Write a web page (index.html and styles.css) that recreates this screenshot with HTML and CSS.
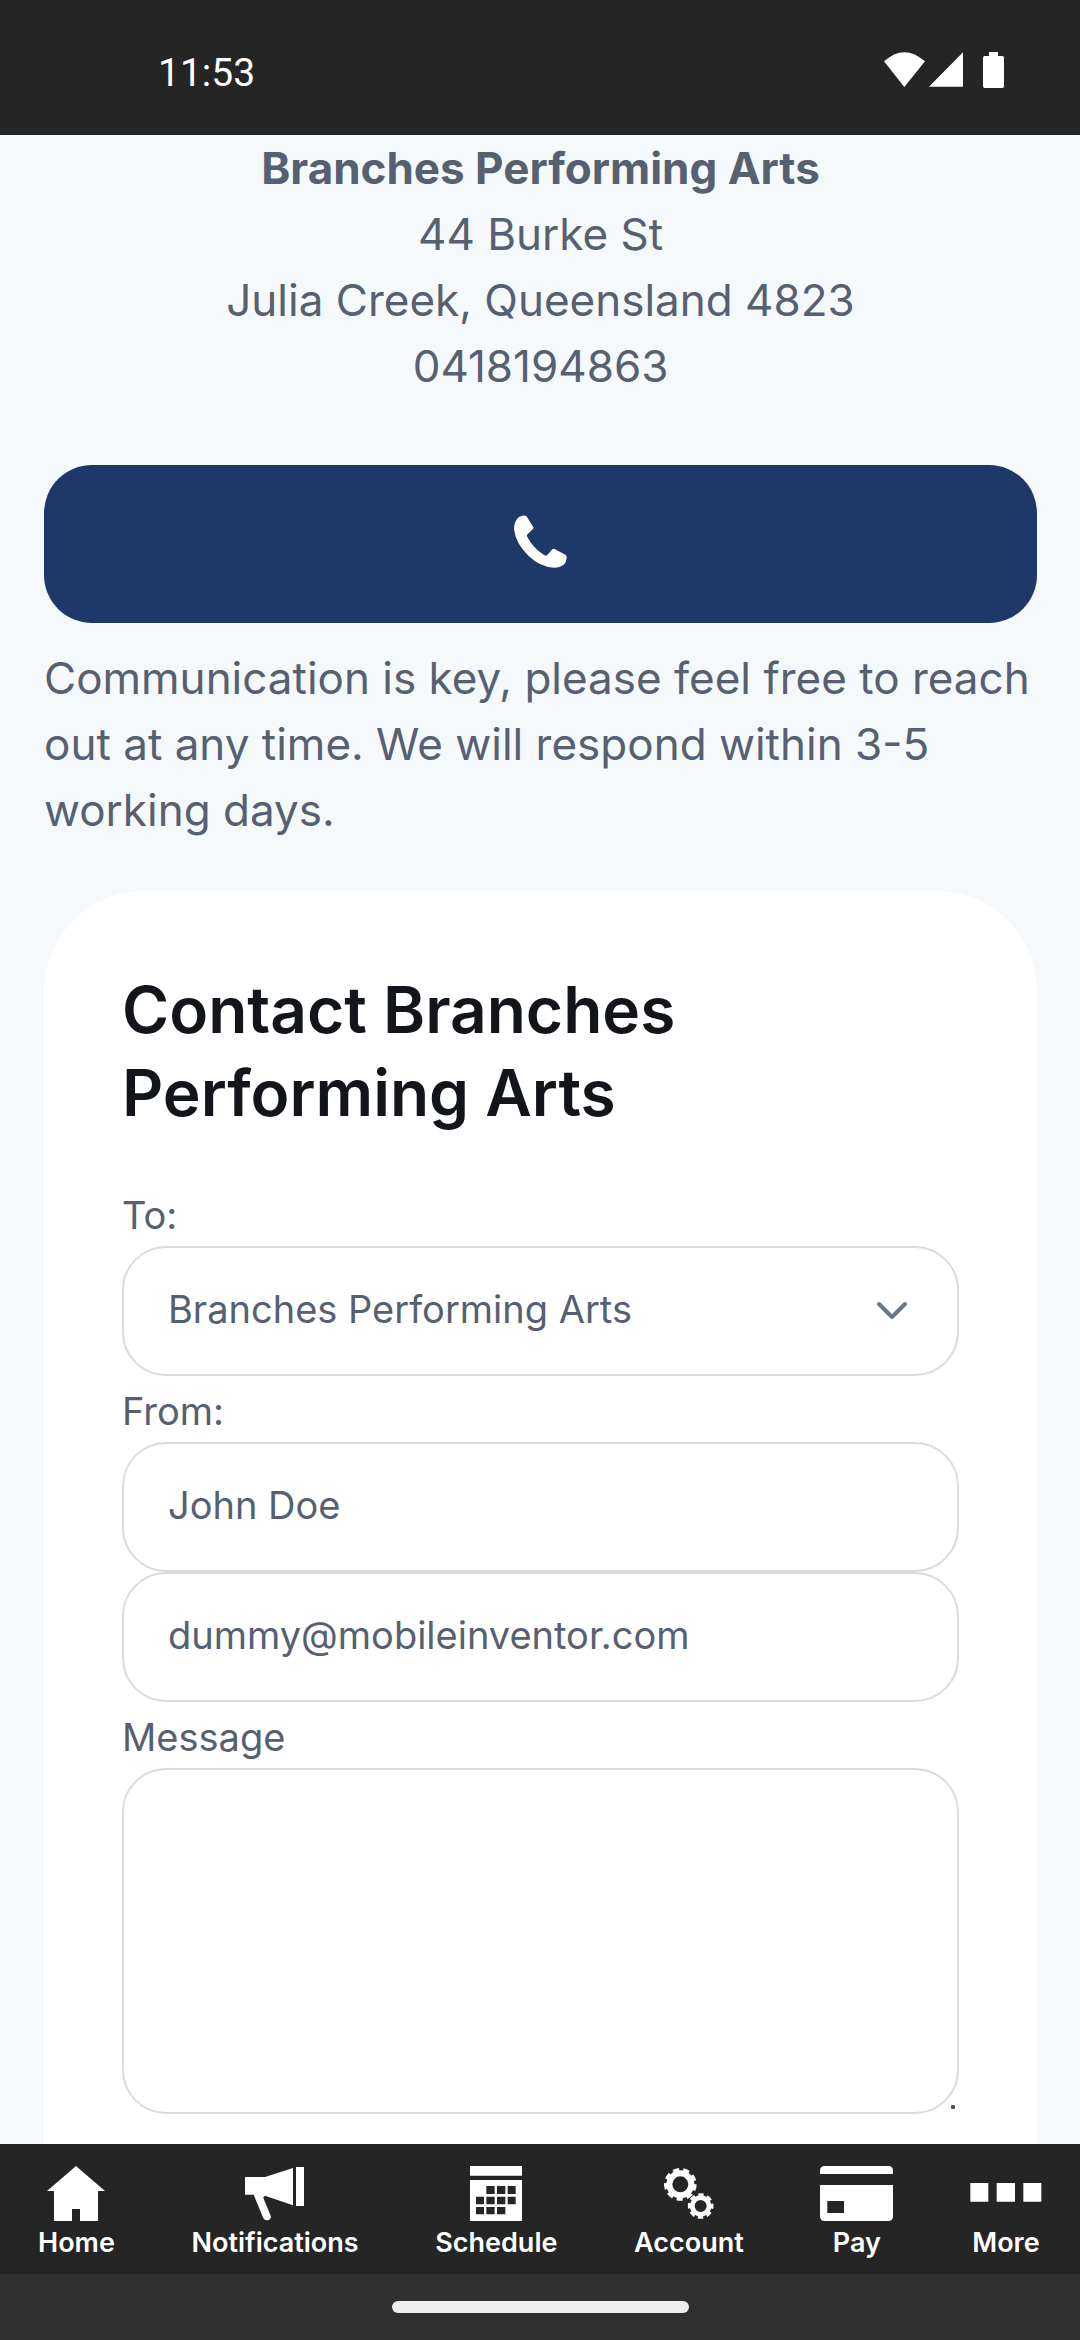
FILE: index.html
```html
<!DOCTYPE html>
<html lang="en">
<head>
<meta charset="utf-8">
<meta name="viewport" content="width=device-width, initial-scale=1">
<title>Branches Performing Arts</title>
<link rel="stylesheet" href="styles.css">
</head>
<body>
<header class="status">
  <time class="clock">11:53</time>
  <div class="status-icons">
    <svg class="wifi" viewBox="129 69 123 105" aria-hidden="true"><path d="M129 97Q190 42 252 97L190 174Z"/></svg>
    <svg class="signal" viewBox="263 69 103 105" aria-hidden="true"><path d="M366 69V174H263Z"/></svg>
    <svg class="battery" viewBox="426 69 63 108" aria-hidden="true"><path d="M444 69H471V81H484Q489 81 489 86V171Q489 177 484 177H431Q426 177 426 171V86Q426 81 431 81H444Z"/></svg>
  </div>
</header>

<main class="content">
  <address class="address"><strong>Branches Performing Arts</strong><br>44 Burke St<br>Julia Creek, Queensland 4823<br>0418194863</address>
  <button class="call" type="button" aria-label="Call">
    <svg class="phone" viewBox="102 73 159 159" aria-hidden="true"><path d="M117 79Q127 73 135 75Q139 75 141 79L160 110Q161 113 158 116L141 132Q140 134 142 139Q159 172 192 193Q198 196 202 193L217 176Q220 173 224 175L256 192Q260 194 260 199Q260 214 250 223Q238 232 222 231Q180 229 146 196Q106 157 102 115Q102 91 117 79Z"/></svg>
  </button>
  <p class="intro">Communication is key, please feel free to reach out at any time. We will respond within 3-5 working days.</p>

  <form class="card">
    <h2 class="title">Contact Branches Performing Arts</h2>
    <div class="label-row"><label class="label" for="to">To:</label></div>
    <div class="select-wrap">
      <select class="field select" id="to"><option>Branches Performing Arts</option></select>
      <svg class="chevron" viewBox="0 0 30 20" aria-hidden="true"><path d="M2 3L15 16L28 3"/></svg>
    </div>
    <div class="label-row"><label class="label" for="name">From:</label></div>
    <input class="field" id="name" type="text" value="John Doe">
    <input class="field" type="email" aria-label="Email" value="dummy@mobileinventor.com">
    <div class="label-row"><label class="label" for="message">Message</label></div>
    <div class="message-wrap">
      <textarea class="field message" id="message"></textarea>
      <span class="grip"></span>
    </div>
  </form>
</main>

<footer class="footer">
  <nav class="tabs">
    <a class="tab" href="#home">
      <svg class="icon" width="58" height="55" viewBox="144 78 174 165" aria-hidden="true"><path d="M231 78L318 153H297V243H243V207H219V243H165V153H144Z"/></svg>
      Home</a>
    <a class="tab" href="#notifications">
      <svg class="icon" width="60" height="55" viewBox="738 78 180 165" aria-hidden="true"><path d="M738 111H798L882 84V196L800 168Q793 167 793 174L815 227Q818 236 809 240Q798 243 793 235L764 164H738ZM891 81H915V198H891Z"/></svg>
      Notifications</a>
    <a class="tab" href="#schedule">
      <svg class="icon" width="52" height="55" viewBox="213 78 156 165" aria-hidden="true"><path fill-rule="evenodd" d="M213 78H369V107H213ZM213 120H369V243H213ZM262 138H287V162H262ZM294 138H319V162H294ZM326 138H350V162H326ZM231 170H255V193H231ZM262 170H287V193H262ZM294 170H319V193H294ZM326 170H350V193H326ZM231 201H255V223H231ZM262 201H287V223H262ZM294 201H319V223H294Z"/></svg>
      Schedule</a>
    <a class="tab" href="#account">
      <svg class="icon gears" width="50" height="55" viewBox="791 78 150 165" aria-hidden="true">
        <circle cx="840" cy="133" r="33" stroke-width="18"/>
        <circle cx="840" cy="133" r="44" stroke-width="10" pathLength="90" stroke-dasharray="6 4"/>
        <circle cx="901" cy="198" r="25" stroke-width="14"/>
        <circle cx="901" cy="198" r="34" stroke-width="9" pathLength="80" stroke-dasharray="6 4" stroke-dashoffset="3"/>
      </svg>
      Account</a>
    <a class="tab" href="#pay">
      <svg class="icon" width="73" height="55" viewBox="240 78 219 165" aria-hidden="true"><path fill-rule="evenodd" d="M240 102V92Q240 78 254 78H445Q459 78 459 92V102ZM240 135H459V229Q459 243 445 243H254Q240 243 240 229ZM262 183H312V219H262Z"/></svg>
      Pay</a>
    <a class="tab" href="#more">
      <svg class="icon" width="72" height="55" viewBox="692 78 216 165" aria-hidden="true"><path d="M693 129H747V185H693ZM772 129H827V185H772ZM852 129H906V185H852Z"/></svg>
      More</a>
  </nav>
  <div class="gesture"><div class="gesture-bar"></div></div>
</footer>
</body>
</html>
```

FILE: styles.css
```css
* { box-sizing: border-box; }

body {
  margin: 0;
  min-height: 100vh;
  display: flex;
  flex-direction: column;
  background: #f5f9fc;
  color: #566070;
  font-family: Inter, "Liberation Sans", sans-serif;
  font-size: 44px;
  line-height: 66px;
}

.status {
  height: 135px;
  padding: 5px 76px 0 158px;
  display: flex;
  align-items: center;
  justify-content: space-between;
  background: #252525;
  color: #fff;
}
.clock { padding-top: 6px; font-family: Roboto, sans-serif; font-size: 39px; }
.status-icons { display: flex; align-items: flex-start; fill: #fff; }
.wifi { width: 41px; height: 35px; }
.signal { width: 34px; height: 35px; margin-left: 4px; }
.battery { width: 21px; height: 36px; margin-left: 20px; }

.content {
  flex: 1;
  display: flex;
  flex-direction: column;
  padding: 0 43px 0 44px;
}
.address { font-style: normal; text-align: center; }
.call {
  height: 158px;
  margin: 66px 0 22px;
  padding: 0 0 6px;
  border: 0;
  border-radius: 48px;
  display: flex;
  align-items: center;
  justify-content: center;
  background: #1e386a;
}
.phone { width: 53px; height: 53px; fill: #fff; }
.intro { margin: 0 0 48px; }

.card {
  flex: 1;
  display: flex;
  flex-direction: column;
  padding: 77px 78px 28px;
  border-radius: 100px 100px 0 0;
  background: #fff;
}
.title {
  margin: 0 0 46px;
  color: #12161b;
  font-size: 64px;
  font-weight: 600;
  line-height: 83px;
}
.label, .field { font-size: 38px; }
.label { line-height: 48px; }
.field {
  width: 100%;
  height: 130px;
  margin: 0;
  padding: 32px 44px 36px;
  border: 2px solid #d9dbdf;
  border-radius: 44px;
  background: #fff;
  color: inherit;
  font-family: inherit;
  outline: 0;
}
.select-wrap, .message-wrap { display: grid; align-items: center; }
.select, .chevron { grid-area: 1 / 1; }
.select { appearance: none; }
.chevron {
  width: 30px;
  height: 20px;
  margin-right: 52px;
  justify-self: end;
  pointer-events: none;
  fill: none;
  stroke: #6b7686;
  stroke-width: 4;
  stroke-linecap: round;
  stroke-linejoin: round;
}
.message-wrap { position: relative; }
.message { height: 346px; resize: none; display: block; }
.grip {
  position: absolute;
  right: 4px;
  bottom: 5px;
  width: 4px;
  height: 4px;
  border-radius: 1px;
  background: #555;
}

.footer { position: sticky; bottom: 0; }
.tabs {
  height: 130px;
  padding: 22px 38px 0;
  display: flex;
  justify-content: space-between;
  background: #252525;
}
.tab {
  display: flex;
  flex-direction: column;
  align-items: center;
  gap: 4px;
  color: #fff;
  font-size: 27px;
  font-weight: 600;
  line-height: 36px;
  text-decoration: none;
}
.icon { fill: currentColor; }
.gears { fill: none; stroke: currentColor; }
.gesture {
  height: 66px;
  display: flex;
  align-items: center;
  justify-content: center;
  background: #2f2f2f;
}
.gesture-bar { width: 297px; height: 12px; border-radius: 6px; background: #eee; }
```
